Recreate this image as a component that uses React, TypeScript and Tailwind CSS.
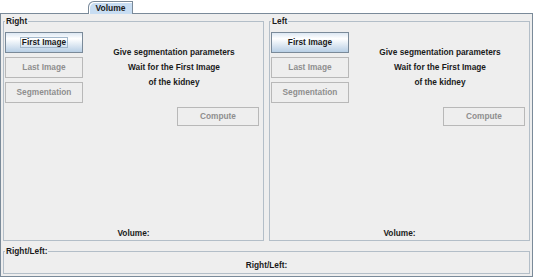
const font = "font-['Liberation_Sans',Arial,sans-serif]"

const Button = ({ label, enabled, focused }: { label: string; enabled?: boolean; focused?: boolean }) => {
  if (!enabled) {
    return (
      <div className="h-[21px] border border-[#b8b8b8] bg-[#eeeeee] text-[#8e8e8e] flex items-center justify-center">
        {label}
      </div>
    )
  }
  return (
    <div className="h-[21px] border border-[#7a8a99] bg-[linear-gradient(to_bottom,#dde8f3_0%,#ffffff_30%,#b8cfe5_100%)] flex items-center justify-center">
      <span className={focused ? "border border-[#a3b8cc] px-px leading-[9px]" : "px-[2px] leading-[11px]"}>
        {label}
      </span>
    </div>
  )
}

const Side = ({ title, focused }: { title: string; focused?: boolean }) => {
  return (
    <fieldset className="flex-1 min-w-0 border border-[#b3bec8] px-px flex flex-col">
      <legend className="px-px leading-[10px]">{title}</legend>
      <div className="flex pt-[6px]">
        <div className="w-[78px] flex flex-col gap-[4px]">
          <Button label="First Image" enabled focused={focused} />
          <Button label="Last Image" />
          <Button label="Segmentation" />
        </div>
        <div className="flex-1 flex flex-col">
          <div className="mt-[13px] pl-[3px] flex flex-col items-center leading-[15px]">
            <span>Give segmentation parameters</span>
            <span>Wait for the First Image</span>
            <span>of the kidney</span>
          </div>
          <div className="mt-[17px] mr-[3px] self-end w-[82px] h-[19px] border border-[#b8b8b8] text-[#8e8e8e] flex items-center justify-center">
            Compute
          </div>
        </div>
      </div>
      <div className="mt-auto mb-[2px] text-center leading-[10px]">Volume:</div>
    </fieldset>
  )
}

export default function App() {
  return (
    <div className={`w-[533px] h-[277px] bg-white flex flex-col ${font} text-[8.3px] font-bold text-[#1a1a1a]`}>
      <div className="h-[13px] pl-[88px] pt-px flex">
        <div className="relative z-10 w-[45px] h-[13px] border border-b-0 border-[#7a8a99] rounded-tl-[6px] bg-[#c8ddf2] shadow-[inset_1px_1px_0_#ffffff] flex items-center justify-center text-[8.5px]">
          Volume
        </div>
      </div>
      <div className="flex-1 border border-[#7a8a99] bg-[#eeeeee] flex flex-col px-[2px] pt-[2px] pb-[2px] gap-[5px]">
        <div className="h-[225px] flex gap-[5px]">
          <Side title="Right" focused />
          <Side title="Left" />
        </div>
        <fieldset className="h-[28px] border border-[#b3bec8] px-px">
          <legend className="px-px leading-[10px]">Right/Left:</legend>
          <div className="pt-[4px] text-center leading-[10px]">Right/Left:</div>
        </fieldset>
      </div>
    </div>
  )
}
